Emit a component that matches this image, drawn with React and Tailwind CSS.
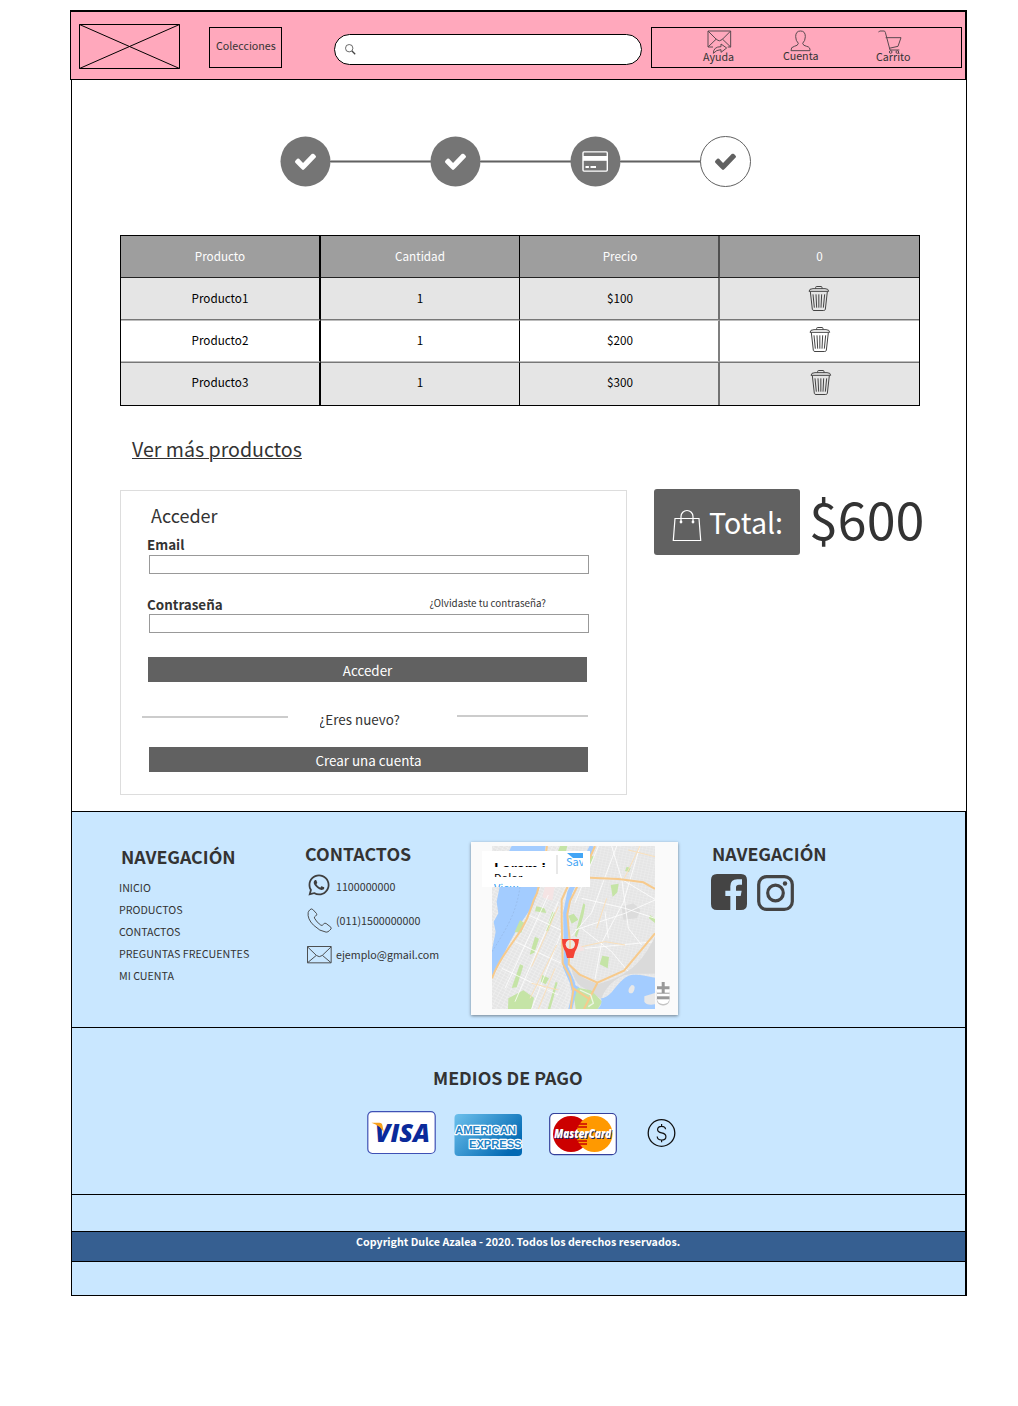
import React from 'react';
import { FaWhatsapp } from 'react-icons/fa';

const CHECK =
  'M1671 566q0 40-28 68l-724 724-136 136q-28 28-68 28t-68-28l-136-136-362-362q-28-28-28-68t28-68l136-136q28-28 68-28t68 28l294 295 656-657q28-28 68-28t68 28l136 136q28 28 28 68z';

function Step({ kind }) {
  const outlined = kind === 'pending';
  return (
    <svg className="h-[51px] w-[51px] shrink-0" viewBox="0 0 51 51">
      <circle cx="25.5" cy="25.5" r="25" fill={outlined ? '#fff' : '#757575'} stroke={outlined ? '#616161' : 'none'} strokeWidth="1" />
      {kind === 'card' ? (
        <g>
          <rect x="13" y="15.900" width="24.300" height="19.200" rx="1" fill="none" stroke="#fff" strokeWidth="1.400" />
          <rect x="13" y="20" width="24.300" height="4.800" fill="#fff" />
          <path d="M15.500 31h3.400M20.500 31h5.500" stroke="#fff" strokeWidth="1.800" />
        </g>
      ) : (
        <svg x="15" y="17.400" width="21" height="16.600" viewBox="121 334 1550 1188" preserveAspectRatio="none">
          <path d={CHECK} fill={outlined ? '#616161' : '#fff'} />
        </svg>
      )}
    </svg>
  );
}

function Connector({ className }) {
  return (
    <div className={'-mx-px ' + className}>
      <div className="h-px bg-[#adadad]" />
      <div className="h-px bg-[#616161]" />
      <div className="h-px bg-[#adadad]" />
    </div>
  );
}

function Trash({ className }) {
  return (
    <svg className={'h-[25px] w-[22px] shrink-0 ' + className} viewBox="-1 0 66 75" fill="none" stroke="#444" strokeWidth="3">
      <path d="M22 8V4q0-2.500 3-2.500h13q3 0 3 3V8M2 16q0-8 12-8h36q11 0 11 8z" />
      <path d="M6 17l6 53q1 3.500 5 3.500h29q4 0 5-3.500l6-53" />
      <path d="M14 25l4 40M23 25l2 40M31.500 25v40M40 25l-2 40M49 25l-4 40" />
    </svg>
  );
}

function HelpIcon() {
  return (
    <svg className="h-[24px] w-[25px]" viewBox="-2 -2 75 72" fill="none" stroke="#5a4a50" strokeWidth="3">
      <path d="M16 49H1V1h68v48h-9M1 1l26 26q8 7 16 0L69 1M1 49l25-24M69 49L44 25" />
      <path d="M17 68q0-20 23-20v-8l17 12-17 13v-8q-14 0-23 11z" />
    </svg>
  );
}

function UserIcon() {
  return (
    <svg className="h-[22px] w-[21px]" viewBox="-2 -2 63 66" fill="none" stroke="#5a4a50" strokeWidth="3">
      <path d="M1 60q-1-11 10-13 11-2 12-9-8-8-8-20Q15 1 29.500 1T44 18q0 12-8 20 1 7 12 9 11 2 10 13z" />
    </svg>
  );
}

function CartIcon() {
  return (
    <svg className="h-[24px] w-[24px]" viewBox="-1 -2 72 72" fill="none" stroke="#5a4a50" strokeWidth="3">
      <path d="M0 5l4-4h13q3 0 4 4l14 53h28M22 21h46l-9 26-27 6" />
      <circle cx="37" cy="64" r="4" />
      <circle cx="57" cy="64" r="4" />
    </svg>
  );
}

function Envelope() {
  return (
    <svg className="h-[18px] w-[25px]" viewBox="-1.500 -1.500 75 54" fill="none" stroke="#444" strokeWidth="2.800">
      <path d="M0 0h71v49H0zM0 1l27 26q8 7 17 0L71 1M1 48l25-21M70 48L45 27" />
    </svg>
  );
}

function Phone() {
  return (
    <svg className="h-[25px] w-[25px]" viewBox="35.500 219.500 75 75" fill="none" stroke="#444" strokeWidth="2.800">
      <path d="M39 233q-3 19 16 38t38 21q6 0 10-5 8-5 4-10l-14-11q-4-3-8 2-4 6-8 3-13-9-19-21-2-4 3-6 6-4 3-8l-11-12q-5-4-9 1-4 4-5 8z" />
    </svg>
  );
}

function City() {
  return (
    <svg className="absolute left-[21px] top-[4px] h-[163px] w-[163px]" viewBox="81 33 489 489">
      <defs>
        <pattern id="west" width="13" height="9" patternUnits="userSpaceOnUse" patternTransform="rotate(28)">
          <path d="M0 0h13M0 0v9" stroke="#f8f8f8" strokeWidth="2" />
        </pattern>
        <pattern id="east" width="11" height="8" patternUnits="userSpaceOnUse" patternTransform="rotate(12)">
          <path d="M0 0h11M0 0v8" stroke="#f4f4f4" strokeWidth="1.800" />
        </pattern>
      </defs>
      <rect x="81" y="33" width="489" height="489" fill="#e5e5e5" />
      <rect x="81" y="33" width="235" height="489" fill="url(#west)" />
      <rect x="300" y="33" width="270" height="489" fill="url(#east)" />
      <path d="M240 155l30-8-8 50-30-10z" fill="#f5e4e4" />
      <path d="M318 322l34 12 6 12-30 8z" fill="#f5e4e4" />
      <path d="M470 215l35-10 22 20-12 25-40 4z" fill="#dcdcdc" />
      <path d="M140 33h102l-18 122-19 55-45 65-30 55-49 100v-85l11-55-6-30 14-25-5-35 8-40-3-45z" fill="#a3ccff" />
      <path d="M165 155c-10 70-30 110-84 195" stroke="#8fb0dd" strokeWidth="1.500" strokeDasharray="6 5" fill="none" />
      <g fill="#c5e4a6">
        <path d="M130 490l45-24 32 22-8 34h-70zM437 150l24-4-4 26-14 14zM412 362l20 4-4 34-24-12zM232 420l20 10-10 18-15-8zM210 305l12 6-14 42-14 6zM165 388l10 4-20 65-15 2zM355 205l6 4-6 34-20 64-6-4zM310 242l16-6 14 18-20 12zM262 230l8 3-20 56-8-2zM165 255l14 10-10 28-20-2zM272 440l6 3-22 79h-8zM285 33h22l-4 16h-24zM365 55l22 10-16 34-12-4zM214 214l24 6 6 14-34-5zM485 95l12 4-5 12-12-3zM555 240l15 10v14l-18-14z" />
      </g>
      <g fill="none" stroke="#fff" strokeWidth="2.600" opacity="0.900">
        <path d="M400 33l-70 170M455 33l-75 200-60 70M525 33l-50 170-65 120-20 110M570 195l-90 40-150 50M570 250l-90-30-130-30M110 400l170 80M150 320l140 65M190 240l100 46M250 180L120 460M280 200L150 500M290 290l-90 232M440 33l30 100 100 60M350 280l90 70 50 60M360 340l210-20M470 130l20 150 40 50M420 230l10 80" />
      </g>
      <g fill="none" stroke="#fae0bb" strokeWidth="3">
        <path d="M525 33l-47 97M570 65l-80-20M280 215l-80 180M275 330l-80 160M350 335l70-15 60 10M270 400l-50 122M200 445l80 20M425 190l-30 90" />
      </g>
      <path d="M570 305c-40 80-80 118-172 142-30-10-60-25-80-50 10 40 20 55 45 65l45 30c20-50 60-76 100-76h62z" fill="#dadada" />
      <path d="M382 33l-40 80-28 60-12 60 2 120-3 42 20 45 6 24" stroke="#a3ccff" strokeWidth="15" fill="none" />
      <path d="M320 445l22 12 16 20-30 20-6 25h-12l10-40z" fill="#a3ccff" />
      <path d="M338 458l40 8 34 34-14 22h-66l-4-30z" fill="#c5e4a6" />
      <path d="M570 428c-28-4-48-12-72-8-24 6-40 30-58 52-12 12-22 18-32 18 4 12 0 22-10 32h172z" fill="#a3ccff" />
      <path d="M500 450q12 0 8 14t-15 10q-8-10 7-24zM538 484l32-10v34q-26 4-32-8z" fill="#e8e8e8" />
      <g fill="none" stroke="#f7ca8c" strokeWidth="6">
        <path d="M81 430c20-60 60-100 90-150s25-70 45-105l20-80 10-62M310 150l-20 45v60l3 130 22 40 10 40-8 57M390 33l-50 115-25 50-8 40 8 90-4 60 32 30 54 25 80-36 93-112M375 128l85 4 75 10 35 20M397 444l-40 78M322 458l48 32" />
      </g>
      <path d="M345 465l32 15 8 25-15 10" fill="none" stroke="#eef6e4" strokeWidth="4" />
      <path d="M291 312h51q-2 23-12 38l-5 19h-19l-5-19q-10-15-10-38z" fill="#f44336" />
      <circle cx="316" cy="328" r="14" fill="#ebe9e2" />
      <path d="M315 315v26" stroke="#f7d2a0" strokeWidth="5" />
    </svg>
  );
}

function MapCard() {
  return (
    <div className="relative mt-[30px] h-[173px] w-[207px] shrink-0 bg-[#fafafa] shadow-[0_1px_3px_rgba(0,0,0,0.45)]">
      <City />
      <div className="absolute left-[11px] top-[9px] h-[36px] w-[108px] overflow-hidden bg-white">
        <div className="absolute left-[12px] top-[12px] h-[4px] w-[60px] overflow-hidden text-[14px] font-bold leading-[10px] text-black">Lorem i</div>
        <div className="absolute left-[12px] top-[20px] h-[6px] w-[60px] overflow-hidden text-[11px] leading-[12px] text-black">Dolor</div>
        <div className="absolute left-[12px] top-[30px] h-[6px] w-[60px] overflow-hidden text-[11px] leading-[12px] text-[#2e9bf0]">View</div>
        <div className="absolute left-[74px] top-[4px] h-[19px] w-[2px] bg-[#e8e8e8]" />
        <svg className="absolute left-[85px] top-[2px] h-[5px] w-[16px]" viewBox="0 0 16 5">
          <path d="M0 0h16v5H6z" fill="#42a5f5" />
        </svg>
        <div className="absolute left-[84px] top-[2px] w-[17px] overflow-hidden text-[11px] leading-[16px] text-[#42a5f5]">Save</div>
      </div>
      <svg className="absolute left-[185px] top-[139px] h-[26px] w-[15px]" viewBox="0 0 15 26">
        <rect x="0.700" y="5" width="13" height="19.500" rx="6" fill="#c4c4c4" />
        <rect x="0.700" y="3" width="13" height="20" rx="6" fill="#fff" />
        <path d="M1 6.700h12.500M7.200 1v11" stroke="#999" strokeWidth="3" />
        <path d="M1 12.200h12.500" stroke="#999" strokeWidth="1" />
        <path d="M1 16.800h12.500" stroke="#999" strokeWidth="3" />
      </svg>
    </div>
  );
}

function Visa() {
  return (
    <svg className="h-[44px] w-[69px]" viewBox="0 0 69 44">
      <rect x="0.800" y="0.600" width="67.400" height="41.900" rx="4.500" fill="#fff" stroke="#3f51b5" strokeWidth="1.200" />
      <text x="8" y="30.500" fontFamily="Open Sans" fontStyle="italic" fontWeight="800" fontSize="25.500" textLength="55" lengthAdjust="spacingAndGlyphs" fill="#0a2a9a">VISA</text>
      <path d="M4.500 11.800h8q2.300 0 2.800 2.200l1.700 8q-3.600-7.500-12.500-10.200z" fill="#f9a11b" />
    </svg>
  );
}

function Amex() {
  return (
    <svg className="mt-[3px] h-[42px] w-[69px]" viewBox="0 0 69 42">
      <defs>
        <linearGradient id="amex" x1="0" y1="0" x2="1" y2="0.600">
          <stop offset="0" stopColor="#6cc0ec" />
          <stop offset="1" stopColor="#0269b3" />
        </linearGradient>
      </defs>
      <rect x="0.500" y="0" width="67.500" height="42" rx="4" fill="url(#amex)" />
      <g fontFamily="Liberation Sans" fontWeight="700" fontSize="11.700" fill="#2484c6" stroke="#fff" strokeWidth="2.600" paintOrder="stroke" strokeLinejoin="round">
        <text x="1" y="19.800" textLength="61" lengthAdjust="spacingAndGlyphs">AMERICAN</text>
        <text x="15" y="33.500" textLength="52.500" lengthAdjust="spacingAndGlyphs">EXPRESS</text>
      </g>
    </svg>
  );
}

function MasterCard() {
  return (
    <svg className="mt-[2px] h-[43px] w-[68px]" viewBox="0 0 68 43">
      <rect x="0.700" y="0.500" width="66.600" height="41.200" rx="4.500" fill="#fff" stroke="#34409b" strokeWidth="1.200" />
      <circle cx="22" cy="21" r="18" fill="#cc0000" />
      <circle cx="45.500" cy="21" r="18" fill="#ff9900" />
      <path d="M30 11h8M29 14h9M29 28h9M30 31h8" stroke="#cc0000" strokeWidth="1.500" />
      <g fontFamily="Open Sans" fontStyle="italic" fontWeight="800" fontSize="12">
        <text x="6" y="26.200" textLength="57" lengthAdjust="spacingAndGlyphs" fill="#1a2a6c">MasterCard</text>
        <text x="5.200" y="25.400" textLength="57" lengthAdjust="spacingAndGlyphs" fill="#fff">MasterCard</text>
      </g>
    </svg>
  );
}

const COL = [
  'w-[200px] border-r-2',
  'w-[199px] border-r',
  'w-[200px] border-r-2 border-r-black/50 pl-[2px]',
  'w-[199px]',
];
const ROWS = [
  { row: 'h-[42px] bg-[#9e9e9e] text-white', cell: 'border-b border-b-[#222] pt-[10px]', data: ['Producto', 'Cantidad', 'Precio', '0'] },
  { row: 'h-[42px] bg-[#e5e5e5]', cell: 'border-b border-b-[#777] pt-[10px]', data: ['Producto1', '1', '$100'], trash: '-mt-[2px] -ml-[1px]' },
  { row: 'h-[42px] bg-white', cell: 'border-y border-y-[#bdbdbd] pt-[9px]', data: ['Producto2', '1', '$200'], trash: '-mt-[3px] ml-[1px]' },
  { row: 'h-[43px] bg-[#e5e5e5]', cell: 'border-t border-t-[#777] pt-[9px]', data: ['Producto3', '1', '$300'], trash: '-mt-[2px] ml-[3px]' },
];

export default function App() {
  return (
    <div className="min-h-[1406px] w-[1018px] bg-white pt-[10px] font-['Noto_Sans_CJK_SC','Noto_Sans',sans-serif] text-[#333]">
      <header className="ml-[70px] flex h-[70px] w-[897px] items-start border-b border-l border-r-2 border-t-2 border-black bg-[#ffa8bc] text-[10.7px] leading-[20px]">
        <svg className="ml-[8px] mt-[12px] h-[45px] w-[101px] shrink-0" viewBox="0 0 101 45" fill="none" stroke="#000">
          <path d="M0.500 0.500h100v44h-100zM0.500 0.500l100 44M0.500 44.500l100-44" />
        </svg>
        <div className="ml-[29px] mt-[15px] h-[41px] w-[73px] shrink-0 border border-black pl-[6px] pt-[8px]">Colecciones</div>
        <div className="ml-[52px] mt-[22px] h-[31px] w-[308px] shrink-0 rounded-full border border-black bg-white pl-[10px] pt-[9px]">
          <svg className="h-[11px] w-[11px]" viewBox="0 0 11 11" fill="none" stroke="#444">
            <circle cx="4.200" cy="4.200" r="3.700" strokeWidth="0.800" />
            <path d="M7 7l3.200 3.200" strokeWidth="1.300" />
          </svg>
        </div>
        <div className="ml-[9px] mt-[15px] flex h-[41px] w-[311px] shrink-0 items-start border border-black">
          <div className="ml-[51px] mt-[2px] w-[80px]">
            <div className="ml-[4px] h-[24px]"><HelpIcon /></div>
            <div className="-mt-[7px]">Ayuda</div>
          </div>
          <div className="mt-[2px] w-[93px]">
            <div className="ml-[7px] h-[22px]"><UserIcon /></div>
            <div className="-mt-[6px]">Cuenta</div>
          </div>
          <div className="mt-[2px]">
            <div className="ml-[2px] h-[24px]"><CartIcon /></div>
            <div className="-mt-[7px]">Carrito</div>
          </div>
        </div>
      </header>

      <main className="ml-[71px] flow-root h-[731px] w-[896px] border-x border-black">
        <div className="ml-[208px] mt-[56px] flex items-center">
          <Step kind="done" />
          <Connector className="w-[101px]" />
          <Step kind="done" />
          <Connector className="w-[91px]" />
          <Step kind="card" />
          <Connector className="w-[81px]" />
          <Step kind="pending" />
        </div>

        <div className="ml-[48px] mt-[48px] h-[171px] w-[800px] border border-black text-center text-[11.7px] leading-[20px] text-black">
          {ROWS.map((r) => (
            <div key={r.data[0]} className={'flex ' + r.row}>
              {r.data.map((d, i) => (
                <div key={i} className={'border-black ' + COL[i] + ' ' + r.cell}>{d}</div>
              ))}
              {r.trash && (
                <div className={'flex justify-center ' + COL[3] + ' ' + r.cell}>
                  <Trash className={r.trash} />
                </div>
              )}
            </div>
          ))}
        </div>

        <a className="ml-[60px] mt-[31px] block w-fit text-[19.6px] leading-[24px] underline decoration-1 underline-offset-[1px]">Ver más productos</a>

        <div className="mt-[28px] flex items-start">
          <section className="ml-[48px] mt-px flow-root h-[305px] w-[507px] shrink-0 border border-[#ddd]">
            <h2 className="ml-[30px] mt-[12px] text-[18px] leading-[24px]">Acceder</h2>
            <div className="ml-[26px] mt-[7px] text-[13.4px] font-bold leading-[20px]">Email</div>
            <div className="ml-[28px] mt-px h-[19px] w-[440px] border border-[#999] bg-white" />
            <div className="ml-[26px] mt-[20px] flex h-[20px] justify-between pr-[80px] leading-[20px]">
              <span className="text-[13.4px] font-bold">Contraseña</span>
              <span className="-mt-px text-[9.8px]">¿Olvidaste tu contraseña?</span>
            </div>
            <div className="ml-[28px] h-[19px] w-[440px] border border-[#999] bg-white" />
            <div className="ml-[27px] mt-[24px] h-[25px] w-[439px] bg-[#616161] pt-[3px] text-center text-[13.4px] leading-[20px] text-white">Acceder</div>
            <div className="ml-[21px] mt-[27px] flex h-[20px] items-start text-[13.4px] leading-[20px]">
              <div className="mt-[7px] h-[2px] w-[146px] bg-[#ccc]" />
              <div className="ml-[32px] flex w-[137px] justify-start overflow-hidden">
                <span className="-ml-px">¿Eres nuevo?</span>
              </div>
              <div className="mt-[6px] h-[2px] w-[131px] bg-[#ccc]" />
            </div>
            <div className="ml-[28px] mt-[18px] h-[25px] w-[439px] bg-[#616161] pt-[3px] text-center text-[13.4px] leading-[20px] text-white">Crear una cuenta</div>
          </section>

          <div className="ml-[27px] flex h-[66px] w-[146px] shrink-0 items-start rounded-[3px] bg-[#616161] text-[28.6px] leading-[40px] text-white">
            <svg className="ml-[18px] mt-[20px] h-[33px] w-[30px] shrink-0" viewBox="0 0 30 33" fill="none" stroke="#fff" strokeWidth="1.200">
              <path d="M3 9.500h24l1.700 22H1.300zM9 13V7.500a6 6 0 0 1 12 0V13" />
              <circle cx="9" cy="13" r="0.800" fill="#fff" />
              <circle cx="21" cy="13" r="0.800" fill="#fff" />
            </svg>
            <span className="ml-[7px] mt-[13px]">Total:</span>
          </div>
          <div className="-mt-px ml-[9px] text-[52px] leading-[60px]">$600</div>
        </div>
      </main>

      <footer className="ml-[71px] w-[896px] border-b border-l border-r-2 border-black bg-[#c9e7ff] text-[10.7px]">
        <div className="flex h-[216px] items-start border-t border-black">
          <nav className="ml-[47px] mt-[32px] w-[186px] shrink-0 leading-[22px]">
            <h3 className="mb-[9px] ml-[2px] text-[17.8px] font-bold leading-[24px]">NAVEGACIÓN</h3>
            <div>INICIO</div>
            <div>PRODUCTOS</div>
            <div>CONTACTOS</div>
            <div>PREGUNTAS FRECUENTES</div>
            <div>MI CUENTA</div>
          </nav>
          <div className="mt-[29px] w-[166px] shrink-0">
            <h3 className="mb-[5px] text-[17.8px] font-bold leading-[24px]">CONTACTOS</h3>
            <div className="flex h-[34px] items-center">
              <div className="-mt-[4px] w-[31px] pl-[2px]"><FaWhatsapp size={24} color="#3f3f3f" /></div>
              1100000000
            </div>
            <div className="flex h-[34px] items-center">
              <div className="-mt-[2px] w-[31px] pl-[2px]"><Phone /></div>
              (011)1500000000
            </div>
            <div className="flex h-[34px] items-center">
              <div className="w-[31px] pl-[2px]"><Envelope /></div>
              ejemplo@gmail.com
            </div>
          </div>
          <MapCard />
          <div className="ml-[34px] mt-[29px]">
            <h3 className="text-[17.8px] font-bold leading-[24px]">NAVEGACIÓN</h3>
            <div className="-ml-px mt-[9px] flex items-start gap-[10px]">
              <svg className="h-[36px] w-[36px]" viewBox="33 117 108 108">
                <path d="M33 135q0-18 18-18h72q18 0 18 18v72q0 18-18 18h-15v-42h14l3-16h-17v-10q0-8 9-8h9v-16h-14q-21 0-21 21v13H76v16h15v42H51q-18 0-18-18z" fill="#444" />
              </svg>
              <svg className="mt-px h-[36px] w-[37px]" viewBox="0 0 37 36" fill="none" stroke="#444" strokeWidth="3.200">
                <rect x="1.700" y="1.600" width="33.600" height="32.800" rx="8" />
                <circle cx="18.500" cy="18" r="7.800" />
                <circle cx="28" cy="8.500" r="2.200" fill="#444" stroke="none" />
              </svg>
            </div>
          </div>
        </div>

        <div className="flow-root h-[167px] border-t border-black">
          <h3 className="ml-[361px] mt-[37px] text-[17.8px] font-bold leading-[24px]">MEDIOS DE PAGO</h3>
          <div className="ml-[295px] mt-[22px] flex items-start">
            <Visa />
            <div className="ml-[18px]"><Amex /></div>
            <div className="ml-[26px]"><MasterCard /></div>
            <svg className="ml-[30px] mt-[7px] h-[30px] w-[30px]" viewBox="0 0 30 30" fill="none" stroke="#111">
              <circle cx="14.500" cy="15" r="13.300" strokeWidth="1.300" />
              <path d="M18.600 11.300q-.3-3-4-3-4 0-4 3.200 0 2.600 4 3.400 4.300.8 4.300 3.800 0 3.300-4.300 3.300-4.200 0-4.400-3.500M14.600 6v2.300M14.600 22v2.300" strokeWidth="1.200" />
            </svg>
          </div>
        </div>

        <div className="h-[37px] border-t border-black" />
        <div className="h-[31px] border-y border-black bg-[#365f91] pl-[284px] font-bold leading-[20px] text-white">
          Copyright Dulce Azalea - 2020. Todos los derechos reservados.
        </div>
        <div className="h-[33px]" />
      </footer>
    </div>
  );
}
